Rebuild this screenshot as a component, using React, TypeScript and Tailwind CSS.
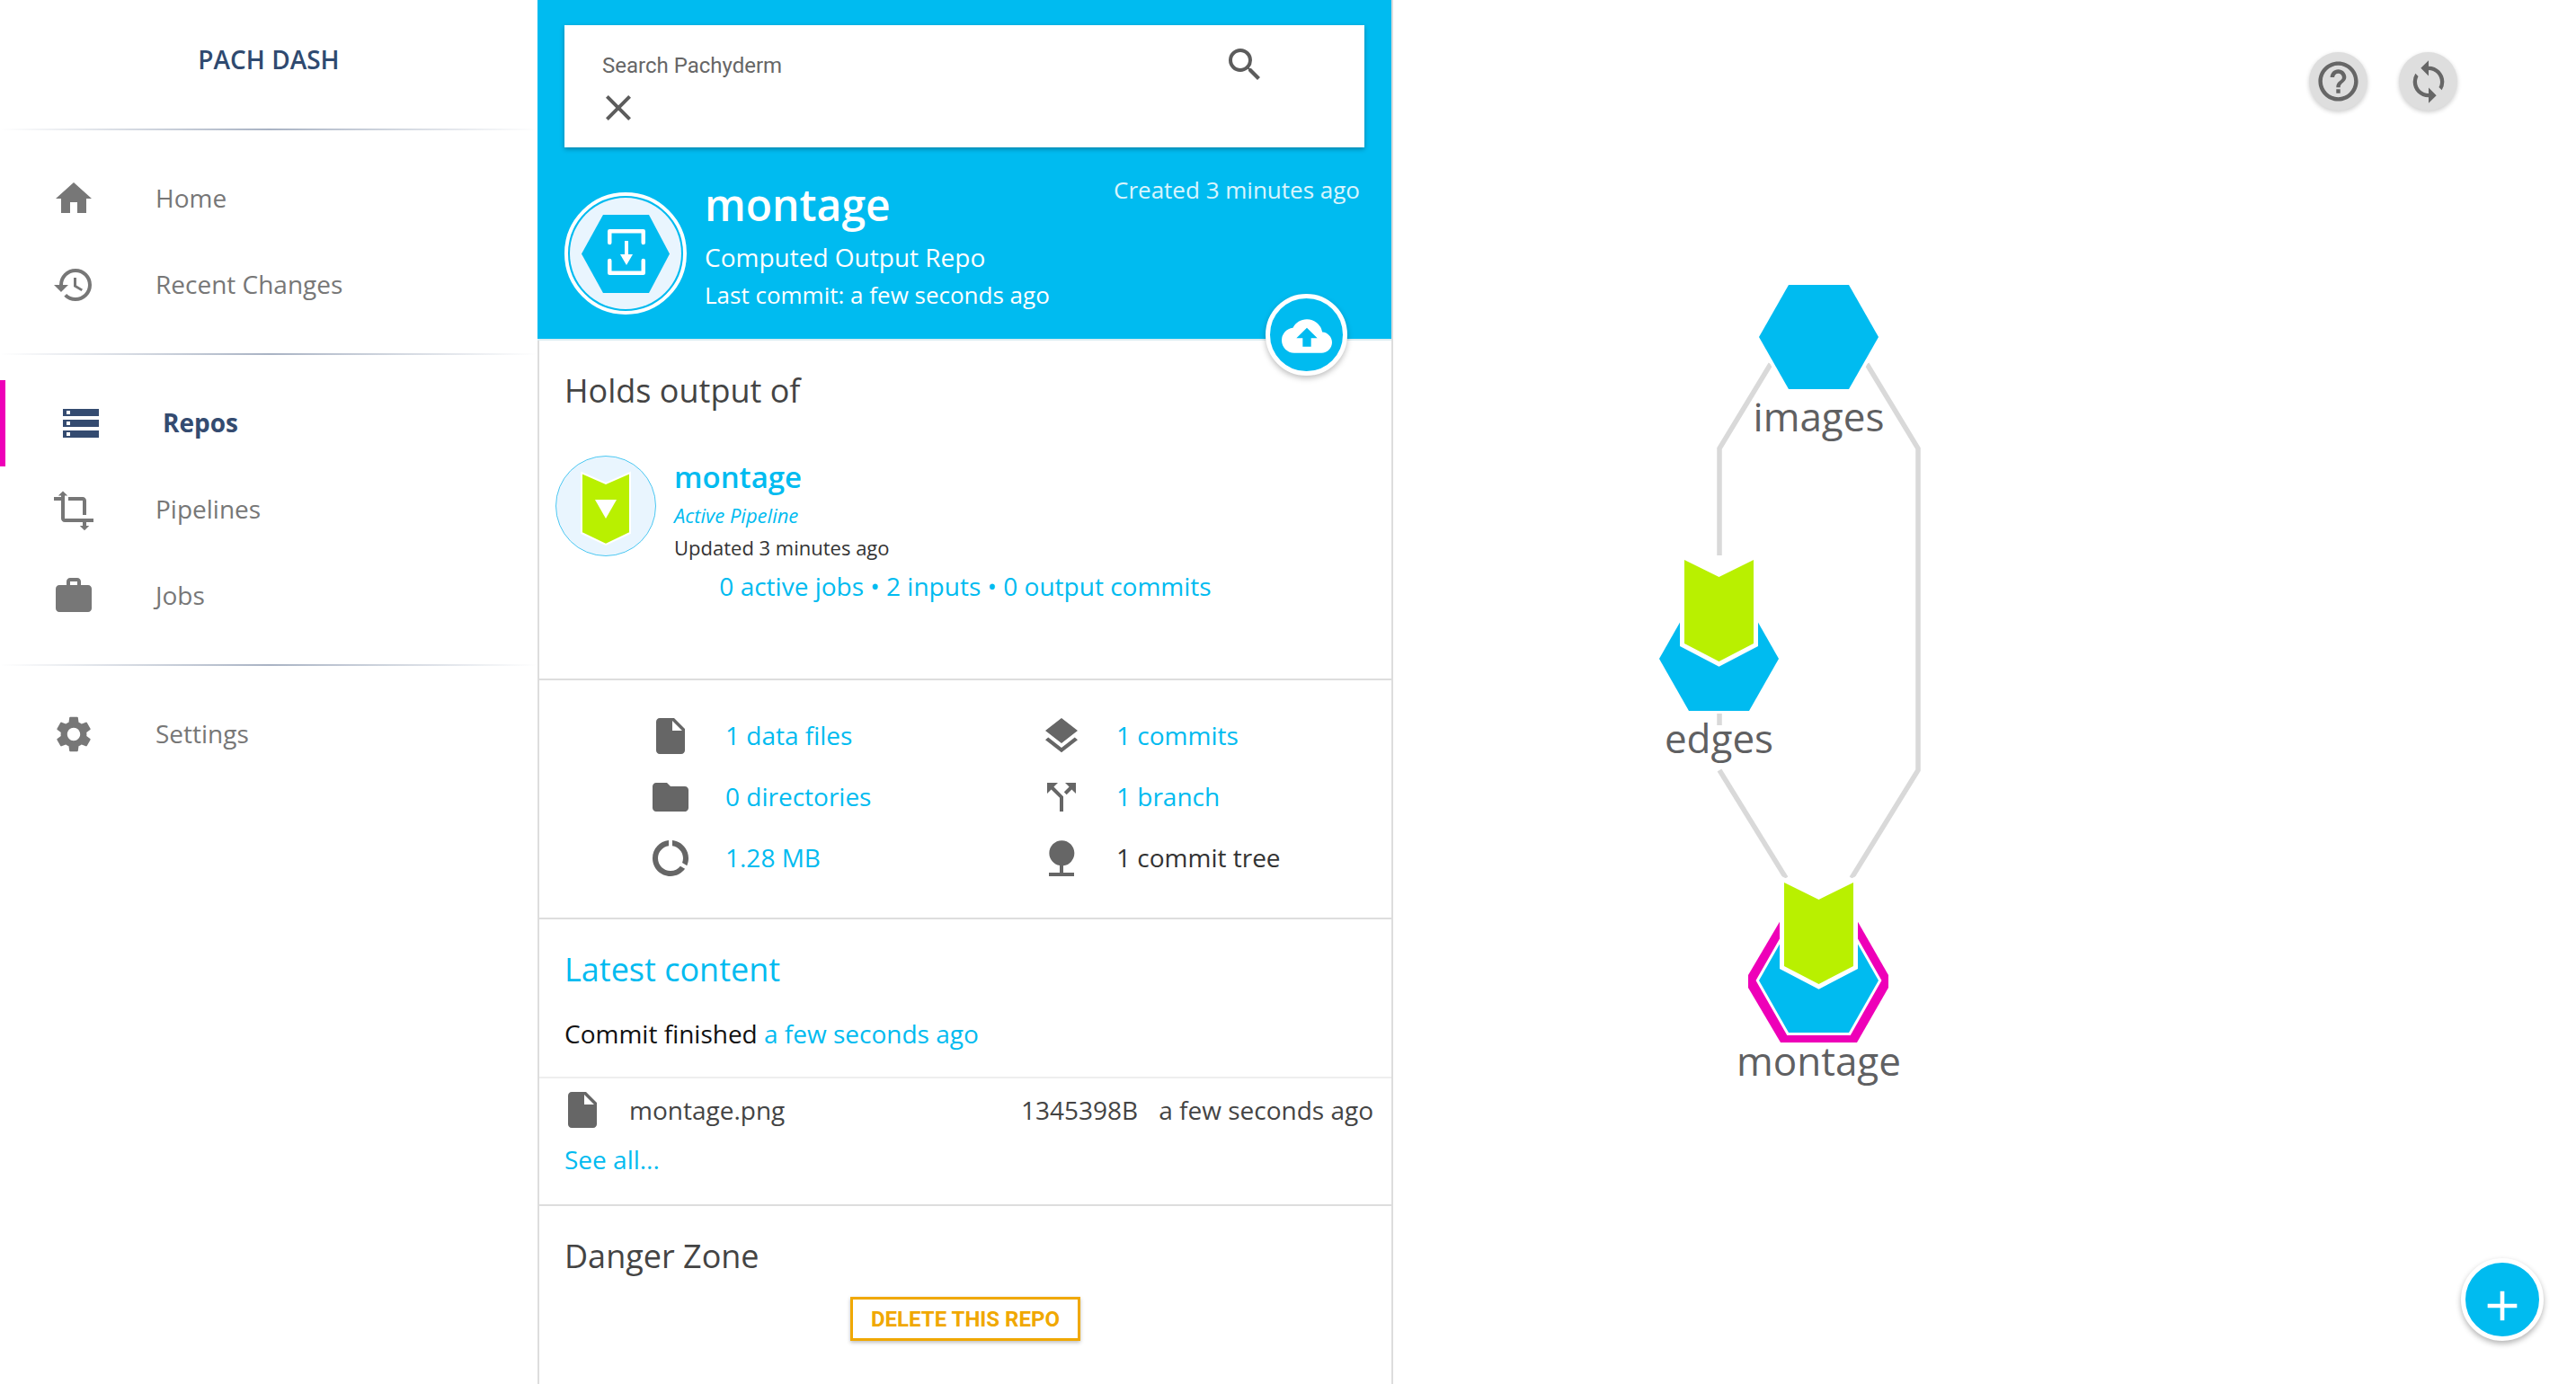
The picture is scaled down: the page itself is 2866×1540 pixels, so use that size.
import {
  MdHome,
  MdHistory,
  MdStorage,
  MdWork,
  MdSettings,
  MdSearch,
  MdClose,
  MdCloudUpload,
  MdInsertDriveFile,
  MdFolder,
  MdDataUsage,
  MdLayers,
  MdCallSplit,
  MdNature,
  MdHelpOutline,
  MdSync,
  MdAdd,
} from "react-icons/md";

const PipelinesIcon = () => (
  <svg viewBox="0 0 24 24" width={48} height={48} fill="currentColor">
    <path d="M17 15h2V7c0-1.1-.9-2-2-2H9v2h8v8z" />
    <path d="M7 17V3H5v2H1v2h4v10c0 1.1.9 2 2 2h10v2h2v-2h4v-2H7z" />
    <path d="M6 1.8 3.4 4.2h5.2zM18 23.6l-2.6-2.6h5.2z" />
  </svg>
);

const Divider = () => <div className="h-[2px] bg-linear-to-r from-transparent via-[#a9b3c4] to-transparent" />;

const NavRow = ({ icon, label }: { icon: React.ReactNode; label: string }) => (
  <div className="flex h-[96px] items-center pl-[58px] text-[#777]">
    <div className="h-[48px] w-[48px]">{icon}</div>
    <span className="mb-[2px] ml-[67px] text-[28px]">{label}</span>
  </div>
);

const Sidebar = () => (
  <div className="w-[598px] shrink-0">
    <div className="flex h-[143px] items-center justify-center pb-[11px] text-[28px] font-semibold text-[#2f4a70]">
      PACH DASH
    </div>
    <Divider />
    <div className="py-[28px]">
      <NavRow icon={<MdHome size={48} />} label="Home" />
      <NavRow icon={<MdHistory size={48} />} label="Recent Changes" />
    </div>
    <Divider />
    <div className="py-[28px]">
      <div className="flex h-[96px] items-center border-l-[6px] border-[#ee00b8] pl-[60px] text-[#344b70]">
        <div className="h-[48px] w-[48px]">
          <MdStorage size={48} />
        </div>
        <span className="mb-[2px] ml-[67px] text-[28px] font-bold">Repos</span>
      </div>
      <NavRow icon={<PipelinesIcon />} label="Pipelines" />
      <NavRow icon={<MdWork size={48} />} label="Jobs" />
    </div>
    <Divider />
    <div className="py-[28px]">
      <NavRow icon={<MdSettings size={48} />} label="Settings" />
    </div>
  </div>
);

const RepoBadge = () => (
  <div className="h-[136px] w-[136px] shrink-0 rounded-full border-[4px] border-white bg-[#00bbf0] p-[2px]">
    <svg viewBox="6 6 124 124" className="h-full w-full">
      <circle cx="68" cy="68" r="62" fill="#e9f5fe" />
      <polygon points="19,68.5 43,25 94,25 117,68.5 94,112 43,112" fill="#00bbf0" />
      <g fill="none" stroke="#fff" strokeWidth="4.5" strokeLinejoin="round" strokeLinecap="round">
        <path d="M50.25 56V43.25H87.75V56" />
        <path d="M50.25 76V89.75H87.75V76" />
      </g>
      <path d="M67 54h4v16h-4z" fill="#fff" />
      <polygon points="62,69 76,69 69,81" fill="#fff" />
    </svg>
  </div>
);

const PipelineBadge = () => (
  <svg viewBox="0 0 112 112" className="h-[112px] w-[112px] shrink-0">
    <circle cx="56" cy="56" r="55.5" fill="#e9f5fe" stroke="#4cc8f2" strokeWidth="1" />
    <polygon points="29,19 56,31 83,19 83,86 56,99 29,86" fill="#b9f000" stroke="#fff" strokeWidth="2" />
    <polygon points="44,49 68,49 56,70" fill="#fff" />
  </svg>
);

const Stat = ({ icon, label, link = true }: { icon: React.ReactNode; label: string; link?: boolean }) => (
  <div className="flex h-[68px] items-center">
    <div className="h-[48px] w-[48px] text-[#666]">{icon}</div>
    <span className={`mb-[2px] ml-[37px] text-[28px] ${link ? "text-[#00bbf0]" : "text-[#333]"}`}>{label}</span>
  </div>
);

const Panel = () => (
  <div className="flex w-[952px] shrink-0 flex-col border-r-2 border-[#ddd]">
    <div className="relative h-[379px] border-b-2 border-[#dcecf0] bg-[#00bbf0]">
      <div className="pt-[28px] pl-[30px] pr-[30px]">
        <div className="h-[136px] bg-white pt-[20px] pl-[36px] shadow-[0_2px_5px_rgba(0,0,0,0.3)]">
          <div className="flex h-[48px] items-center justify-between pr-[109px]">
            <span className="mt-[2px] ml-[6px] font-['Roboto',sans-serif] text-[24px] text-[#666]">Search Pachyderm</span>
            <MdSearch size={48} className="text-[#5c5c5c]" />
          </div>
          <MdClose size={48} className="text-[#5c5c5c]" />
        </div>
      </div>
      <div className="flex pt-[27px] pl-[30px] pr-[35px] text-white">
        <div className="mt-[23px]">
          <RepoBadge />
        </div>
        <div className="ml-[20px] flex-1 pt-[5px]">
          <div className="text-[48px] leading-[64px] font-semibold">montage</div>
          <div className="mt-[5px] text-[28px] leading-[42px]">Computed Output Repo</div>
          <div className="mt-[1px] text-[26px] leading-[40px]">Last commit: a few seconds ago</div>
        </div>
        <div className="text-[26px] leading-[40px] text-white/85">Created 3 minutes ago</div>
      </div>
      <div className="absolute top-[327px] right-[49px] flex h-[91px] w-[91px] items-center justify-center rounded-full border-[5px] border-white bg-[#00bbf0] pt-[2px] text-white shadow-[0_3px_6px_rgba(0,0,0,0.25)]">
        <MdCloudUpload size={56} />
      </div>
    </div>

    <div className="flex-1 border-l-2 border-[#ddd]">
      <div className="h-[378px] border-b-2 border-[#ddd] pt-[32px]">
        <div className="ml-[28px] text-[36px] leading-[48px] text-[#444]">Holds output of</div>
        <div className="mt-[48px] ml-[18px] flex">
          <PipelineBadge />
          <div className="ml-[20px] pt-[2px]">
            <div className="text-[33px] leading-[44px] font-semibold text-[#00bbf0]">montage</div>
            <div className="mt-[4px] text-[22px] leading-[32px] text-[#00bbf0] italic">Active Pipeline</div>
            <div className="mt-[4px] text-[22px] leading-[32px] text-[#333]">Updated 3 minutes ago</div>
          </div>
        </div>
        <div className="mt-[7px] text-center text-[28px] leading-[40px] text-[#00bbf0]">
          0 active jobs • 2 inputs • 0 output commits
        </div>
      </div>

      <div className="grid h-[266px] grid-cols-[435px_1fr] content-start border-b-2 border-[#ddd] pt-[28px] pl-[122px]">
        <Stat icon={<MdInsertDriveFile size={48} />} label="1 data files" />
        <Stat icon={<MdLayers size={48} />} label="1 commits" />
        <Stat icon={<MdFolder size={48} />} label="0 directories" />
        <Stat icon={<MdCallSplit size={48} />} label="1 branch" />
        <Stat icon={<MdDataUsage size={48} />} label="1.28 MB" />
        <Stat icon={<MdNature size={48} />} label="1 commit tree" link={false} />
      </div>

      <div className="h-[177px] border-b-2 border-[#eee] pt-[32px] pl-[28px]">
        <div className="text-[36px] leading-[48px] text-[#00bbf0]">Latest content</div>
        <div className="mt-[27px] text-[28px] leading-[40px] text-[#111]">
          Commit finished <span className="text-[#00bbf0]">a few seconds ago</span>
        </div>
      </div>

      <div className="h-[142px] border-b-2 border-[#ddd] pt-[15px]">
        <div className="flex h-[40px] items-center pr-[20px] text-[28px] text-[#444]">
          <div className="ml-[24px] h-[48px] w-[48px] text-[#666]">
            <MdInsertDriveFile size={48} />
          </div>
          <span className="ml-[28px] flex-1">montage.png</span>
          <span>1345398B</span>
          <span className="ml-[23px]">a few seconds ago</span>
        </div>
        <div className="mt-[15px] ml-[28px] text-[28px] leading-[40px] text-[#00bbf0]">See all...</div>
      </div>

      <div className="pt-[32px]">
        <div className="ml-[28px] text-[36px] leading-[48px] text-[#444]">Danger Zone</div>
        <div className="mt-[21px] flex justify-center">
          <button className="flex h-[49px] w-[256px] items-center justify-center border-[3px] border-[#f0a800] bg-white font-['Roboto',sans-serif] text-[24px] font-bold text-[#f0a800] shadow-[0_2px_4px_rgba(0,0,0,0.25)]">
            DELETE THIS REPO
          </button>
        </div>
      </div>
    </div>
  </div>
);

const hex = (cx: number, cy: number) =>
  `${cx - 66.5},${cy} ${cx - 33.5},${cy - 58} ${cx + 33.5},${cy - 58} ${cx + 66.5},${cy} ${cx + 33.5},${cy + 58} ${cx - 33.5},${cy + 58}`;

const chevron = (cx: number, top: number) =>
  `${cx - 38.5},${top} ${cx},${top + 19} ${cx + 38.5},${top} ${cx + 38.5},${top + 93} ${cx},${top + 113} ${cx - 38.5},${top + 93}`;

const NodeLabel = ({ x, y, children }: { x: number; y: number; children: string }) => (
  <text
    x={x}
    y={y}
    textAnchor="middle"
    fontSize="44"
    fill="#5f6062"
    stroke="#fff"
    strokeWidth="6"
    paintOrder="stroke"
    className="font-['Open_Sans',sans-serif]"
  >
    {children}
  </text>
);

const Graph = () => (
  <svg viewBox="1550 0 1316 1540" className="absolute inset-0 h-full w-full">
    <g fill="none" stroke="#d9d9d9" strokeWidth="5.5">
      <path d="M1970 405 1913 499V618" />
      <path d="M1913 794V807" />
      <path d="M1913 857 1987 977" />
      <path d="M2077 405 2134 499V857L2060 977" />
    </g>

    <polygon points={hex(2023.5, 375)} fill="#00bbf0" stroke="#fff" strokeWidth="8" paintOrder="stroke" />
    <NodeLabel x={2023.5} y={480}>images</NodeLabel>

    <polygon points={hex(1912.5, 733)} fill="#00bbf0" />
    <polygon points={chevron(1912.5, 623)} fill="#b9f000" stroke="#fff" strokeWidth="10" paintOrder="stroke" />
    <NodeLabel x={1912.5} y={838}>edges</NodeLabel>

    <polygon points="1945,1085 1981,1024 2066,1024 2101,1085 2101,1099 2066,1160 1981,1160 1945,1099" fill="#ee00b8" />
    <polygon points={hex(2023.5, 1091)} fill="#00bbf0" stroke="#fff" strokeWidth="6" paintOrder="stroke" />
    <polygon points={chevron(2023.5, 982)} fill="#b9f000" stroke="#fff" strokeWidth="10" paintOrder="stroke" />
    <NodeLabel x={2023.5} y={1197}>montage</NodeLabel>
  </svg>
);

const Canvas = () => (
  <div className="relative flex-1">
    <Graph />
    <div className="absolute top-[58px] left-[1019px] flex h-[65px] w-[65px] items-center justify-center rounded-full bg-[#dedede] text-[#666] shadow-[0_2px_5px_rgba(0,0,0,0.2)]">
      <MdHelpOutline size={53} />
    </div>
    <div className="absolute top-[58px] left-[1119px] flex h-[65px] w-[65px] items-center justify-center rounded-full bg-[#dedede] text-[#666] shadow-[0_2px_5px_rgba(0,0,0,0.2)]">
      <MdSync size={52} />
    </div>
    <div className="absolute top-[1400px] left-[1188px] flex h-[92px] w-[92px] items-center justify-center rounded-full border-[5px] border-white bg-[#00bbf0] pt-[14px] text-white shadow-[0_3px_6px_rgba(0,0,0,0.3)]">
      <MdAdd size={56} />
    </div>
  </div>
);

export default function App() {
  return (
    <div className="flex h-[1540px] w-[2866px] overflow-hidden bg-white font-['Open_Sans',sans-serif]">
      <Sidebar />
      <Panel />
      <Canvas />
    </div>
  );
}
